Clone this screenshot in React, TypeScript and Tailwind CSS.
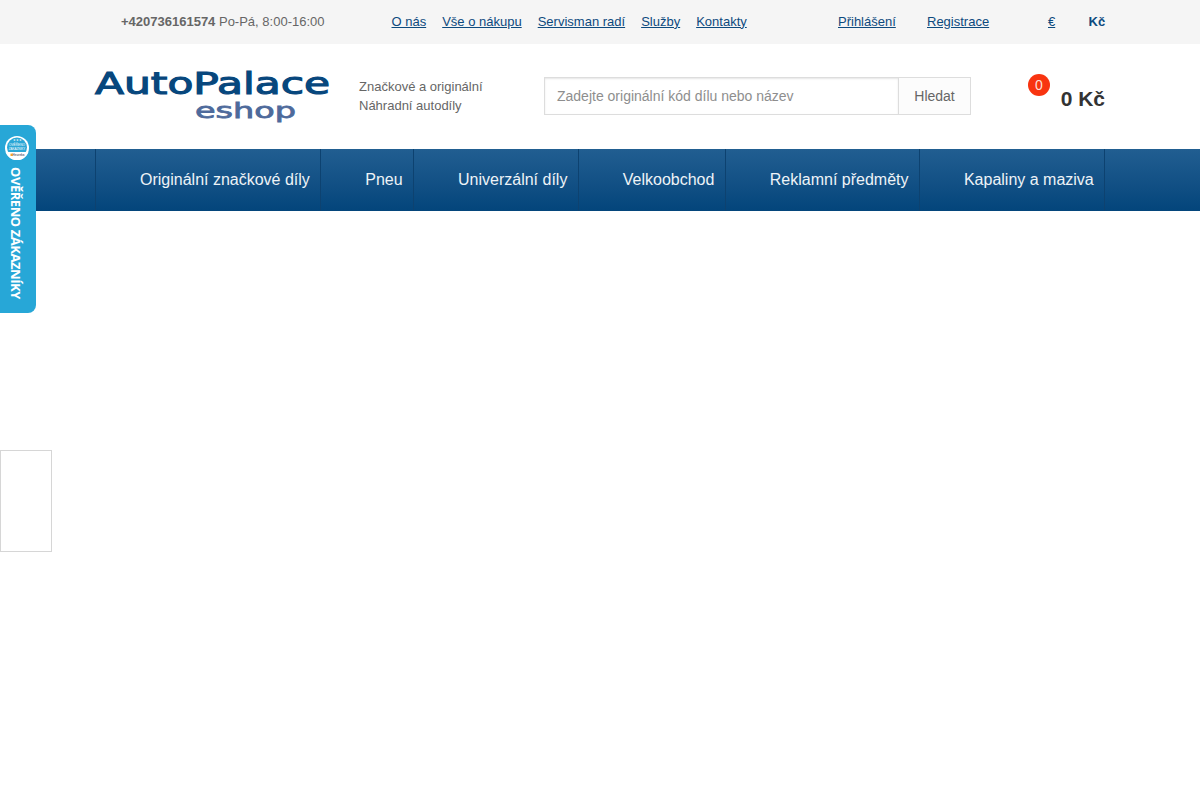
import React from "react";

const nav = ["Originální značkové díly", "Pneu", "Univerzální díly", "Velkoobchod", "Reklamní předměty", "Kapaliny a maziva"];
const links = ["O nás", "Vše o nákupu", "Servisman radí", "Služby", "Kontakty"];

function Logo() {
  return (
    <svg width="236" height="54" viewBox="0 0 236 54" className="block overflow-visible">
      <text x="0" y="25" textLength="235" lengthAdjust="spacingAndGlyphs" fontFamily="'DejaVu Sans', sans-serif" fontWeight="400" fontSize="30" fill="#07477d" stroke="#07477d" strokeWidth="1.1">AutoPalace</text>
      <text x="100" y="49" textLength="101" lengthAdjust="spacingAndGlyphs" fontFamily="'DejaVu Sans', sans-serif" fontWeight="400" fontSize="22" fill="#4e6a9b" stroke="#4e6a9b" strokeWidth="0.8">eshop</text>
    </svg>
  );
}

function Seal() {
  return (
    <svg width="24" height="24" viewBox="0 0 24 24" className="block">
      <circle cx="12" cy="12" r="12" fill="#fff" />
      <circle cx="12" cy="11.5" r="10" fill="#2aa7d6" />
      <path d="M0.6 16h22.8a12 12 0 0 1-22.8 0Z" fill="#fff" />
      <text x="12" y="5.2" textAnchor="middle" fontSize="3" fill="#fff" fontFamily="'Liberation Sans', sans-serif">★★★</text>
      <text x="12" y="9.5" textAnchor="middle" fontSize="3.2" fill="#fff" fontFamily="'Liberation Sans', sans-serif">OVĚŘENO</text>
      <text x="12" y="13.5" textAnchor="middle" fontSize="3" fill="#fff" fontFamily="'Liberation Sans', sans-serif">ZÁKAZNÍKY</text>
      <rect x="5.5" y="17.6" width="2.4" height="2.4" fill="#f5a623" />
      <text x="13.5" y="20" textAnchor="middle" fontSize="3" fontWeight="700" fill="#667" fontFamily="'Liberation Sans', sans-serif">Heureka</text>
    </svg>
  );
}

export default function App() {
  return (
    <div className="relative min-h-[800px] bg-white font-['Liberation_Sans',Arial,sans-serif] text-[#666]">
      <div className="h-[44px] bg-[#f5f5f5] flex items-center text-[13px] pb-[1px]">
        <div className="ml-[121px] w-[270.5px] shrink-0">
          <b>+420736161574</b> Po-Pá, 8:00-16:00
        </div>
        <div className="flex gap-4 w-[446.5px] shrink-0">
          {links.map((l) => (
            <a key={l} className="underline text-[#0d4a7e]">{l}</a>
          ))}
        </div>
        <a className="underline text-[#0d4a7e] w-[89px] shrink-0">Přihlášení</a>
        <a className="underline text-[#0d4a7e] w-[121px] shrink-0">Registrace</a>
        <a className="underline text-[#0d4a7e] w-[40.5px] shrink-0">€</a>
        <b className="text-[#0d4a7e]">Kč</b>
      </div>

      <div className="h-[105px] flex items-start pl-[95px]">
        <div className="w-[264px] shrink-0 mt-[25px]"><Logo /></div>
        <div className="w-[185px] shrink-0 mt-[33px] text-[13px] leading-[19px]">
          Značkové a originální<br />Náhradní autodíly
        </div>
        <div className="mt-[33px] flex h-[38px] w-[427px] shrink-0">
          <div className="w-[354px] border border-r-0 border-[#ddd] bg-white px-3 flex items-center text-[14px] text-[#8e8e8e] shadow-[inset_0_1px_2px_rgba(0,0,0,0.1)]">
            Zadejte originální kód dílu nebo název
          </div>
          <div className="w-[73px] border border-[#ddd] bg-[#fcfcfc] flex items-center justify-center text-[14px] text-[#666]">
            Hledat
          </div>
        </div>
        <div className="relative ml-[57px] w-[77px] mt-[30px]">
          <div className="w-[22px] h-[22px] rounded-full bg-[#f83410] text-[#fde0d8] text-[14px] flex items-center justify-center">0</div>
          <div className="absolute right-0 top-[13px] text-[21px] leading-[24px] font-bold text-[#333]">0 Kč</div>
        </div>
      </div>

      <div className="h-[62px] bg-gradient-to-b from-[#215e91] to-[#03457b] pl-[95px]">
        <div className="flex h-full border-l border-[#0d4270] w-fit">
          {nav.map((n) => (
            <div key={n} className="pl-[44px] pr-[10.4px] flex items-center text-[16px] text-[#eef3f7] border-r border-[#0d4270] pb-[1px]">
              {n}
            </div>
          ))}
        </div>
      </div>

      <div className="absolute left-0 top-[125px] w-[36px] h-[188px] bg-[#27a7d7] rounded-r-[8px] flex flex-col items-center pt-[11px] pr-[2px]">
        <Seal />
        <div className="mt-[7px] ml-[-3px] font-['Open_Sans',sans-serif] font-bold text-[13px] leading-[16px] tracking-[-0.45px] text-white [writing-mode:vertical-rl] whitespace-nowrap">
          OVĚŘENO ZÁKAZNÍKY
        </div>
      </div>

      <div className="absolute left-0 top-[450px] w-[52px] h-[102px] border border-[#d6d6d6] bg-white" />
    </div>
  );
}
